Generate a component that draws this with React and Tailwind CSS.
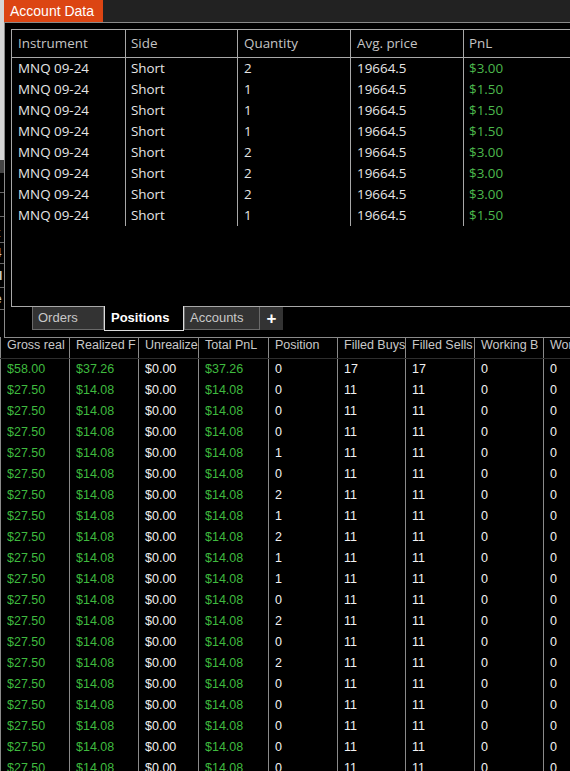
import React from "react";

const popupRows = [
  ["2", "$3.00"],
  ["1", "$1.50"],
  ["1", "$1.50"],
  ["1", "$1.50"],
  ["2", "$3.00"],
  ["2", "$3.00"],
  ["2", "$3.00"],
  ["1", "$1.50"],
];

const cols = [
  { name: "Gross real", w: "w-[69px]" },
  { name: "Realized F", w: "w-[69px]" },
  { name: "Unrealize", w: "w-[60px]" },
  { name: "Total PnL", w: "w-[70px]" },
  { name: "Position", w: "w-[69px]" },
  { name: "Filled Buys", w: "w-[68px]" },
  { name: "Filled Sells", w: "w-[69px]" },
  { name: "Working B", w: "w-[69px]" },
  { name: "Working S", w: "flex-1" },
];

const positions = [0, 0, 0, 0, 1, 0, 2, 1, 2, 1, 1, 0, 2, 0, 2, 0, 0, 0, 0, 0];

const rows = positions.map((p, i) =>
  i === 0
    ? ["$58.00", "$37.26", "$0.00", "$37.26", "0", "17", "17", "0", "0"]
    : ["$27.50", "$14.08", "$0.00", "$14.08", String(p), "11", "11", "0", "0"]
);

const green = new Set([0, 1, 3]);

function AccountPopup() {
  return (
    <div className="absolute left-[4px] top-0 right-0 h-[338px] flex flex-col">
      <div className="flex h-[22px] shrink-0">
        <div className="w-[99px] bg-[#dc4513] text-white text-[14px] leading-[22px] pl-[6px] font-['Liberation_Sans',Arial,sans-serif]">
          Account Data
        </div>
        <div className="flex-1 bg-[#222222]" />
      </div>
      <div className="flex-1 bg-black border-t border-l border-b border-[#8a8a8a] pt-[6px] pl-[6px]">
        <div className="h-[278px] border-t border-l border-b border-[#a8a8a8] font-['Open_Sans',sans-serif] text-[13.4px]">
          <div className="flex h-[28px] border-b border-[#a8a8a8] text-[#c4c4c4] items-center">
            <div className="w-[114px] h-full flex items-center pl-[6px] border-r border-[#a8a8a8]">Instrument</div>
            <div className="w-[112px] h-full flex items-center pl-[5px] border-r border-[#a8a8a8]">Side</div>
            <div className="w-[113px] h-full flex items-center pl-[6px] border-r border-[#a8a8a8]">Quantity</div>
            <div className="w-[113px] h-full flex items-center pl-[6px] border-r border-[#a8a8a8]">Avg. price</div>
            <div className="flex-1 h-full flex items-center pl-[5px]">PnL</div>
          </div>
          <div>
            {popupRows.map((r, i) => (
              <div key={i} className="flex h-[21px] items-center text-[#e6e6e6]">
                <div className="w-[114px] h-full flex items-center pl-[6px] border-r border-[#a8a8a8]">MNQ 09-24</div>
                <div className="w-[112px] h-full flex items-center pl-[5px] border-r border-[#a8a8a8]">Short</div>
                <div className="w-[113px] h-full flex items-center pl-[6px] border-r border-[#a8a8a8]">{r[0]}</div>
                <div className="w-[113px] h-full flex items-center pl-[6px] border-r border-[#a8a8a8]">19664.5</div>
                <div className="flex-1 h-full flex items-center pl-[5px] text-[#4cb84c]">{r[1]}</div>
              </div>
            ))}
          </div>
        </div>
        <div className="flex h-[24px] pl-[21px] font-['Liberation_Sans',Arial,sans-serif] text-[13px]">
          <div className="w-[72px] h-[23px] bg-[#333333] border border-[#6a6a6a] border-t-0 text-[#c8c8c8] pl-[5px] leading-[22px]">Orders</div>
          <div className="w-[80px] h-[25px] -mt-[1px] bg-black border border-[#dcdcdc] border-t-0 text-white font-bold pl-[6px] leading-[23px]">Positions</div>
          <div className="w-[76px] h-[23px] bg-[#333333] border border-[#6a6a6a] border-t-0 text-[#c8c8c8] pl-[5px] leading-[22px]">Accounts</div>
          <div className="w-[23px] h-[23px] bg-[#333333] text-white font-bold text-[17px] flex items-center justify-center">+</div>
        </div>
      </div>
    </div>
  );
}

function LeftStrip() {
  return (
    <div className="w-[4px] h-[337px] overflow-hidden flex flex-col font-['Liberation_Sans',Arial,sans-serif] text-[12px] text-[#cfcfcf]">
      <div className="h-[160px] bg-[#d6d6d6] shrink-0" />
      <div className="h-[13px] bg-[#444444] shrink-0" />
      <div className="h-[20px] border-b border-[#666] shrink-0" />
      <div className="h-[24px] border-b border-[#666] shrink-0" />
      <div className="h-[26px] border-b border-[#666] shrink-0 flex items-end">
        <span className="-ml-[3px] leading-[18px]">t</span>
      </div>
      <div className="h-[21px] border-b border-[#666] shrink-0 flex items-center">
        <span className="-ml-[5px]">4</span>
      </div>
      <div className="h-[24px] border-b border-[#666] shrink-0 flex items-center">
        <span className="-ml-[1px] font-bold">l</span>
      </div>
      <div className="h-[22px] border-b border-[#666] shrink-0 flex items-center">
        <span className="-ml-[5px]">e</span>
      </div>
      <div className="flex-1" />
    </div>
  );
}

export default function App() {
  return (
    <div className="relative w-[570px] h-[771px] overflow-hidden bg-black">
      <LeftStrip />
      <div className="font-['Liberation_Sans',Arial,sans-serif] text-[12.5px]">
        <div className="flex h-[22px] border-b border-[#2e2e2e] text-[#c8c8c8]">
          {cols.map((c, i) => (
            <div
              key={i}
              className={`${c.w} h-full border-l border-[#8a8a8a] pl-[6px] pt-[1px] leading-[15px] overflow-hidden whitespace-nowrap shrink-0`}
            >
              {c.name}
            </div>
          ))}
        </div>
        {rows.map((r, ri) => (
          <div key={ri} className="flex h-[21px]">
            {r.map((v, ci) => (
              <div
                key={ci}
                className={`${cols[ci].w} h-full border-l border-[#8a8a8a] pl-[6px] leading-[21px] overflow-hidden whitespace-nowrap shrink-0 ${
                  green.has(ci) ? "text-[#3fba3f]" : "text-[#f2f2f2]"
                }`}
              >
                {v}
              </div>
            ))}
          </div>
        ))}
      </div>
      <AccountPopup />
    </div>
  );
}
